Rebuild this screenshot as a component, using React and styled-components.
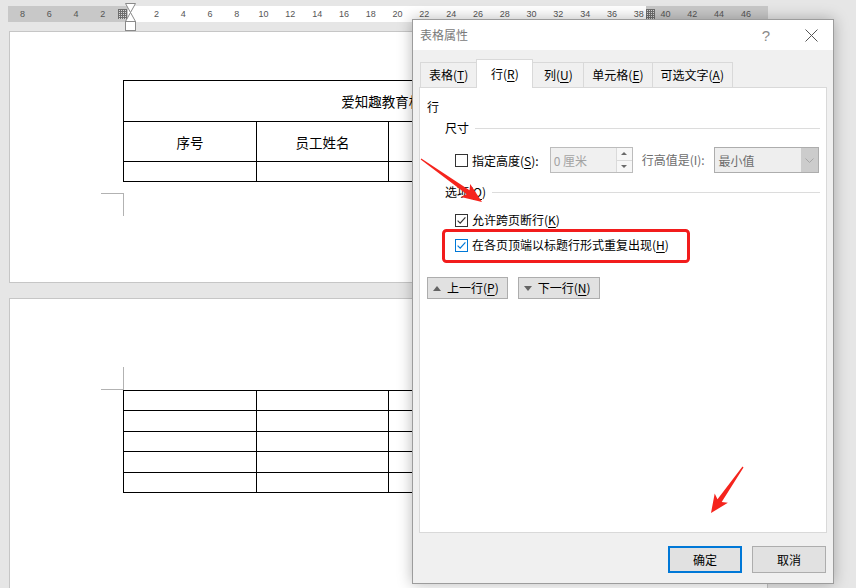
import styled, { createGlobalStyle } from 'styled-components';

const GlobalStyle = createGlobalStyle`
  html, body {
    margin: 0;
    padding: 0;
  }
  body {
    background: #e6e6e6;
    font-family: "Noto Sans CJK SC", "Noto Sans", sans-serif;
  }
`;

const Screen = styled.div`
  position: relative;
  width: 856px;
  height: 588px;
  overflow: hidden;
  background: #e6e6e6;
`;

/* ---------- ruler ---------- */

const Ruler = styled.div`
  position: relative;
  box-sizing: border-box;
  margin: 6px 0 0 8px;
  width: 760px;
  height: 16px;
  padding-left: 1px;
  display: flex;
  align-items: center;
  background: linear-gradient(
    to right,
    #c8c8c8 0,
    #c8c8c8 120px,
    #fff 120px,
    #fff 638px,
    #c8c8c8 638px
  );
`;

const Tick = styled.span`
  flex: 0 0 26.81px;
  text-align: center;
  font: 9px/16px "Liberation Sans", Arial, sans-serif;
  color: #555;
`;

const GridMark = styled.span`
  position: absolute;
  top: 3px;
  left: ${p => p.$left}px;
  width: 9px;
  height: 10px;
  background-color: #d8d8d8;
  background-image: linear-gradient(90deg, #6e6e6e 1px, transparent 1px),
    linear-gradient(#6e6e6e 1px, transparent 1px);
  background-size: 2px 2px;
`;

const IndentMarker = styled.svg`
  position: absolute;
  left: 117px;
  top: -3px;
`;

/* ---------- document pages ---------- */

const Pages = styled.div`
  margin-top: 9px;
  padding-left: 9px;
`;

const Page = styled.div`
  box-sizing: border-box;
  width: 759px;
  height: ${p => p.$height}px;
  margin-top: ${p => p.$gap || 0}px;
  padding: ${p => p.$top}px 0 0 113px;
  background: #fff;
  border: 1px solid #c6c6c6;
`;

const DocTable = styled.table`
  border-collapse: collapse;
  table-layout: fixed;
  width: 530px;
  font-size: 13.5px;
  color: #000;
`;

const Cell = styled.td`
  border: 1px solid #000;
  height: ${p => p.$h || 19}px;
  padding: 0;
  text-align: center;
  vertical-align: middle;
  line-height: 16px;
`;

const CornerMark = styled.div`
  width: 22px;
  height: 22px;
  margin: ${p => (p.$above ? '0' : '11px')} 0 0 -22px;
  border-right: 1px solid #b2b2b2;
  ${p => (p.$above ? 'border-bottom' : 'border-top')}: 1px solid #b2b2b2;
`;

/* ---------- dialog ---------- */

const Dialog = styled.div`
  position: absolute;
  left: 412px;
  top: 19px;
  width: 422px;
  height: 565px;
  box-sizing: border-box;
  display: flex;
  flex-direction: column;
  background: #f0f0f0;
  border: 1px solid #9c9c9c;
  box-shadow: 0 0 14px rgba(0, 0, 0, 0.28);
  font-size: 12px;
  color: #000;
`;

const TitleBar = styled.div`
  height: 30px;
  flex: 0 0 30px;
  display: flex;
  align-items: center;
  padding: 0 7px;
  background: #fff;
  color: #7a7a7a;
`;

const TitleText = styled.span`
  flex: 1;
  line-height: 16px;
`;

const TitleButton = styled.span`
  width: 30px;
  display: flex;
  justify-content: center;
  align-items: center;
  color: #8a8a8a;
  font: 15px "Liberation Sans", Arial, sans-serif;
  & + & {
    margin-left: 15px;
  }
`;

const Body = styled.div`
  flex: 1;
  display: flex;
  flex-direction: column;
  padding: 9px 6px 0 6px;
`;

const TabRow = styled.div`
  display: flex;
  align-items: flex-end;
  height: 28px;
  padding-left: 1px;
  position: relative;
  z-index: 1;
`;

const Tab = styled.div`
  box-sizing: border-box;
  min-width: ${p => (p.$active ? 57 : 52)}px;
  height: ${p => (p.$active ? 29 : 25)}px;
  margin-bottom: ${p => (p.$active ? -1 : 0)}px;
  padding: 0 8px;
  display: flex;
  align-items: center;
  justify-content: center;
  background: ${p => (p.$active ? '#fff' : '#f0f0f0')};
  border: 1px solid #d9d9d9;
  border-bottom: none;
  line-height: 16px;
  & + & {
    margin-left: -1px;
  }
`;

const Key = styled.u`
  text-decoration-thickness: 1px;
  text-underline-offset: 2px;
`;

const Panel = styled.div`
  flex: 1;
  display: flex;
  flex-direction: column;
  align-items: flex-start;
  padding: 11px 6px 0 7px;
  background: #fff;
  border: 1px solid #d9d9d9;
`;

const SectionLabel = styled.div`
  line-height: 16px;
`;

const GroupHeader = styled.div`
  align-self: stretch;
  display: flex;
  align-items: center;
  margin: ${p => p.$mt}px 0 0 18px;
  line-height: 16px;
  &::after {
    content: '';
    flex: 1;
    height: 1px;
    margin-left: 6px;
    background: #dcdcdc;
  }
`;

const SizeRow = styled.div`
  display: flex;
  align-items: center;
  height: 26px;
  margin: 11px 0 0 28px;
`;

const CheckRow = styled.label`
  display: flex;
  align-items: center;
  height: 16px;
  margin: ${p => p.$mt}px 0 0 28px;
  line-height: 16px;
`;

const Box = styled.svg`
  flex: 0 0 13px;
  margin-right: 4px;
`;

const Muted = styled.span`
  color: #6d6d6d;
  margin-left: ${p => p.$ml || 0}px;
  line-height: 16px;
`;

const SpinBox = styled.div`
  box-sizing: border-box;
  width: 83px;
  height: 26px;
  margin-left: 11px;
  display: flex;
  align-items: stretch;
  background: #f0f0f0;
  border: 1px solid #bcbcbc;
`;

const SpinValue = styled.span`
  flex: 1;
  padding-left: 3px;
  display: flex;
  align-items: center;
  color: #a3a3a3;
`;

const SpinButtons = styled.div`
  width: 15px;
  display: flex;
  flex-direction: column;
  border-left: 1px solid #dadada;
  background: #f7f7f7;
`;

const SpinHalf = styled.span`
  flex: 1;
  display: flex;
  align-items: center;
  justify-content: center;
  & + & {
    border-top: 1px solid #dadada;
  }
  &::before {
    content: '';
    border-left: 3px solid transparent;
    border-right: 3px solid transparent;
    ${p => (p.$up ? 'border-bottom' : 'border-top')}: 3px solid #6a6a6a;
  }
`;

const Select = styled.div`
  box-sizing: border-box;
  width: 105px;
  height: 26px;
  margin-left: 9px;
  display: flex;
  background: #eeeeee;
  border: 1px solid #adadad;
`;

const SelectValue = styled.span`
  flex: 1;
  padding-left: 4px;
  display: flex;
  align-items: center;
  color: #6d6d6d;
`;

const SelectArrow = styled.span`
  width: 17px;
  display: flex;
  align-items: center;
  justify-content: center;
  background: #cccccc;
`;

const NavRow = styled.div`
  display: flex;
  gap: 10px;
  margin-top: 24px;
`;

const NavButton = styled.button`
  box-sizing: border-box;
  height: 22px;
  padding: 0 8px 0 5px;
  display: flex;
  align-items: center;
  gap: 6px;
  font: inherit;
  line-height: 16px;
  color: #000;
  background: #e1e1e1;
  border: 1px solid #adadad;
  border-radius: 0;
  &::before {
    content: '';
    border-left: 4.5px solid transparent;
    border-right: 4.5px solid transparent;
    ${p => (p.$up ? 'border-bottom' : 'border-top')}: 5px solid #646464;
  }
`;

const Footer = styled.div`
  flex: 0 0 50px;
  display: flex;
  justify-content: flex-end;
  align-items: flex-start;
  gap: 10px;
  padding: 13px 1px 0 0;
  box-sizing: border-box;
`;

const DialogButton = styled.button`
  box-sizing: border-box;
  width: 74px;
  height: 27px;
  font: inherit;
  color: #000;
  background: #e1e1e1;
  border: ${p => (p.$default ? '2px solid #0078d7' : '1px solid #adadad')};
  border-radius: 0;
  line-height: 16px;
`;

const Annotations = styled.svg`
  position: absolute;
  left: 0;
  top: 0;
  pointer-events: none;
`;

function Checkbox({ checked, focused }) {
  const c = focused ? '#0078d7' : '#333';
  return (
    <Box width="13" height="13" viewBox="0 0 13 13">
      <rect x="0.5" y="0.5" width="12" height="12" fill="#fff" stroke={c} />
      {checked && (
        <path d="M2.6 6.6 L5.2 9.2 L10.4 3.4" fill="none" stroke={c} strokeWidth="1.2" />
      )}
    </Box>
  );
}

const ticks = [8, 6, 4, 2, ''].concat(
  Array.from({ length: 23 }, (_, i) => (i + 1) * 2)
);

export default function App() {
  return (
    <Screen>
      <GlobalStyle />

      <Ruler>
        {ticks.map((t, i) => (
          <Tick key={i}>{t}</Tick>
        ))}
        <GridMark $left={110} />
        <GridMark $left={638} />
        <IndentMarker width="11" height="28" viewBox="0 0 11 28">
          <path
            d="M0.5 0.5 H10.5 L5.5 9.5 L10.5 18.5 H0.5 L5.5 9.5 Z"
            fill="#fff"
            stroke="#8a8a8a"
          />
          <rect x="0.5" y="18.5" width="10" height="9" fill="#fff" stroke="#8a8a8a" />
        </IndentMarker>
      </Ruler>

      <Pages>
        <Page $height={252} $top={48}>
          <DocTable>
            <colgroup>
              <col style={{ width: 133 }} />
              <col style={{ width: 132 }} />
              <col style={{ width: 132 }} />
              <col style={{ width: 133 }} />
            </colgroup>
            <tbody>
              <tr>
                <Cell colSpan={4} $h={40}>
                  爱知趣教育机构
                </Cell>
              </tr>
              <tr>
                <Cell $h={39}>序号</Cell>
                <Cell $h={39}>员工姓名</Cell>
                <Cell $h={39}>所属部门</Cell>
                <Cell $h={39}>联系电话</Cell>
              </tr>
              <tr>
                <Cell />
                <Cell />
                <Cell />
                <Cell />
              </tr>
            </tbody>
          </DocTable>
          <CornerMark />
        </Page>

        <Page $height={300} $top={68} $gap={15}>
          <CornerMark $above />
          <DocTable>
            <colgroup>
              <col style={{ width: 133 }} />
              <col style={{ width: 132 }} />
              <col style={{ width: 132 }} />
              <col style={{ width: 133 }} />
            </colgroup>
            <tbody>
              {[0, 1, 2, 3, 4].map(r => (
                <tr key={r}>
                  <Cell $h={19.4} />
                  <Cell $h={19.4} />
                  <Cell $h={19.4} />
                  <Cell $h={19.4} />
                </tr>
              ))}
            </tbody>
          </DocTable>
        </Page>
      </Pages>

      <Dialog>
        <TitleBar>
          <TitleText>表格属性</TitleText>
          <TitleButton>?</TitleButton>
          <TitleButton>
            <svg width="13" height="13" viewBox="0 0 13 13">
              <path d="M0.5 0.5 L12.5 12.5 M12.5 0.5 L0.5 12.5" stroke="#555" strokeWidth="1" />
            </svg>
          </TitleButton>
        </TitleBar>

        <Body>
          <TabRow>
            <Tab>
              表格(<Key>T</Key>)
            </Tab>
            <Tab $active>
              行(<Key>R</Key>)
            </Tab>
            <Tab>
              列(<Key>U</Key>)
            </Tab>
            <Tab>
              单元格(<Key>E</Key>)
            </Tab>
            <Tab>
              可选文字(<Key>A</Key>)
            </Tab>
          </TabRow>

          <Panel>
            <SectionLabel>行</SectionLabel>
            <GroupHeader $mt={5}>尺寸</GroupHeader>
            <SizeRow>
              <Checkbox />
              <span>
                指定高度(<Key>S</Key>):
              </span>
              <SpinBox>
                <SpinValue>0 厘米</SpinValue>
                <SpinButtons>
                  <SpinHalf $up />
                  <SpinHalf />
                </SpinButtons>
              </SpinBox>
              <Muted $ml={9}>行高值是(I):</Muted>
              <Select>
                <SelectValue>最小值</SelectValue>
                <SelectArrow>
                  <svg width="9" height="5" viewBox="0 0 9 5">
                    <path d="M0.5 0.5 L4.5 4.5 L8.5 0.5" fill="none" stroke="#a6a6a6" />
                  </svg>
                </SelectArrow>
              </Select>
            </SizeRow>

            <GroupHeader $mt={11}>
              <span>
                选项(<Key>O</Key>)
              </span>
            </GroupHeader>
            <CheckRow $mt={12}>
              <Checkbox checked />
              <span>
                允许跨页断行(<Key>K</Key>)
              </span>
            </CheckRow>
            <CheckRow $mt={9}>
              <Checkbox checked focused />
              <span>
                在各页顶端以标题行形式重复出现(<Key>H</Key>)
              </span>
            </CheckRow>

            <NavRow>
              <NavButton $up>
                <span>
                  上一行(<Key>P</Key>)
                </span>
              </NavButton>
              <NavButton>
                <span>
                  下一行(<Key>N</Key>)
                </span>
              </NavButton>
            </NavRow>
          </Panel>

          <Footer>
            <DialogButton $default>确定</DialogButton>
            <DialogButton>取消</DialogButton>
          </Footer>
        </Body>
      </Dialog>

      <Annotations width="856" height="588" viewBox="0 0 856 588">
        <rect x="443.5" y="230.5" width="245" height="31" rx="3" fill="none" stroke="#f21c1c" strokeWidth="3" />
        <polygon
          points="421.3,158.4 469.5,190.2 470.2,184 482,202 461,197 466.7,194.3 420.7,159.6"
          fill="#f5241d"
        />
        <polygon
          points="743.5,467.4 721.7,502.1 727.9,502.8 711,513 714.7,493.6 717.5,499.3 742.5,466.6"
          fill="#f5241d"
        />
      </Annotations>
    </Screen>
  );
}
